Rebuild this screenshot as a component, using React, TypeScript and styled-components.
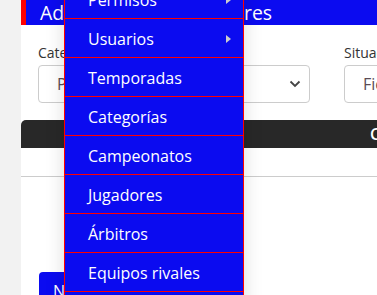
import React from "react";
import styled, { createGlobalStyle } from "styled-components";

const Global = createGlobalStyle`
  html, body { margin: 0; padding: 0; background: #f2f2f2; }
  body { font-family: "Open Sans", "Noto Sans", sans-serif; overflow: hidden; }
  #root { width: 377px; height: 295px; overflow: hidden; }
`;

const Page = styled.div`
  display: flex;
  width: 377px;
  height: 295px;
  padding-left: 21px;
  box-sizing: border-box;
`;

const Main = styled.div`
  position: relative;
  flex: 1;
  background: #fff;
  display: flex;
  flex-direction: column;
  min-width: 0;
  & > * { flex-shrink: 0; }
`;

const Header = styled.div`
  height: 25px;
  background: #0b0bf0;
  border-left: 5px solid #ff0000;
  color: #fff;
  font-size: 19.4px;
  line-height: 25px;
  padding-left: 14px;
  white-space: nowrap;
  overflow: hidden;
`;

const FormRow = styled.div`
  display: flex;
  gap: 34px;
  padding: 18px 0 0 17px;
`;

const Field = styled.div<{ $w: number }>`
  display: flex;
  flex-direction: column;
  gap: 3px;
  width: ${(p) => p.$w}px;
  flex-shrink: 0;
`;

const Label = styled.label`
  font-size: 14px;
  line-height: 19px;
  color: #333;
  white-space: nowrap;
`;

const Select = styled.div`
  height: 38px;
  box-sizing: border-box;
  border: 1px solid #ccc;
  border-radius: 4px;
  display: flex;
  align-items: center;
  justify-content: space-between;
  padding: 0 8px 0 18px;
  font-size: 16px;
  color: #5a4a55;
`;

const Chevron = () => (
  <svg width="12" height="8" viewBox="0 0 12 8">
    <path d="M1.5 1.5 L6 6 L10.5 1.5" fill="none" stroke="#444" strokeWidth="1.8" />
  </svg>
);

const DarkBar = styled.div`
  margin-top: 17px;
  height: 28px;
  background: #282828;
  border-top-left-radius: 5px;
  color: #fff;
  font-size: 16px;
  font-weight: 600;
  line-height: 28px;
  padding-left: 349px;
  white-space: nowrap;
`;

const TableRow = styled.div`
  height: 28px;
  border-bottom: 1px solid #ccc;
`;

const ButtonRow = styled.div`
  padding: 95px 0 0 18px;
`;

const Button = styled.button`
  background: #0b0bf0;
  color: #fff;
  border: none;
  border-radius: 4px;
  font-family: inherit;
  font-size: 16px;
  height: 38px;
  padding: 0 14px;
`;

const Menu = styled.ul`
  position: absolute;
  left: 43px;
  top: -20px;
  width: 180px;
  margin: 0;
  padding: 0;
  list-style: none;
  background: #0b0bf0;
  border-left: 1px solid #ff0000;
  border-right: 1px solid #ff0000;
  box-sizing: border-box;
  box-shadow: 0 0 18px rgba(0, 0, 0, 0.14);
`;

const Item = styled.li`
  height: 39px;
  box-sizing: border-box;
  border-bottom: 1px solid #ff0000;
  display: flex;
  align-items: center;
  justify-content: space-between;
  padding: 1px 12px 0 23px;
  color: #fff;
  font-size: 16px;
  white-space: nowrap;
`;

const Arrow = styled.span`
  width: 0;
  height: 0;
  border-top: 4.5px solid transparent;
  border-bottom: 4.5px solid transparent;
  border-left: 5px solid #ccc;
`;

const items: { label: string; sub?: boolean }[] = [
  { label: "Permisos", sub: true },
  { label: "Usuarios", sub: true },
  { label: "Temporadas" },
  { label: "Categorías" },
  { label: "Campeonatos" },
  { label: "Jugadores" },
  { label: "Árbitros" },
  { label: "Equipos rivales" },
  { label: "Partidos" },
];

export default function App() {
  return (
    <>
      <Global />
      <Page>
        <Main>
          <Header>Administrar los jugadores</Header>
          <FormRow>
            <Field $w={272}>
              <Label>Categoría</Label>
              <Select>
                <span>Primera</span>
                <Chevron />
              </Select>
            </Field>
            <Field $w={200}>
              <Label>Situación</Label>
              <Select>
                <span>Fichado</span>
                <Chevron />
              </Select>
            </Field>
          </FormRow>
          <DarkBar>Categoría</DarkBar>
          <TableRow />
          <ButtonRow>
            <Button>Nuevo jugador</Button>
          </ButtonRow>
          <Menu>
            {items.map((it) => (
              <Item key={it.label}>
                <span>{it.label}</span>
                {it.sub && <Arrow />}
              </Item>
            ))}
          </Menu>
        </Main>
      </Page>
    </>
  );
}
